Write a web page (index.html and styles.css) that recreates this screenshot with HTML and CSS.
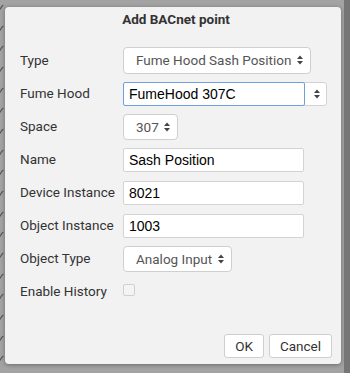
FILE: index.html
```html
<!DOCTYPE html>
<html lang="en">
<head>
  <meta charset="UTF-8" />
  <title>Add BACnet point</title>
  <meta name="viewport" content="width=device-width, initial-scale=1.0">
  <link rel="stylesheet" href="styles.css">
</head>
<body>

<div class="ticks">
  <span>✓</span><span>✓</span><span>✓</span><span>✓</span><span>✓</span><span>✓</span>
  <span>✓</span><span>✓</span><span>✓</span><span>✓</span><span>✓</span><span>✓</span>
  <span>✓</span><span>✓</span><span>✓</span><span>✓</span><span>✓</span><span>✓</span>
</div>

<div class="dialog">
  <h1 class="title">Add BACnet point</h1>

  <form class="fields" autocomplete="off">
    <label>Type</label>
    <div class="select select-type">
      <span>Fume Hood Sash Position</span>
      <svg class="arrows" width="6" height="10" viewBox="0 0 6 10"><polygon points="0,4 3,0.5 6,4"/><polygon points="0,6 3,9.5 6,6"/></svg>
    </div>

    <label>Fume Hood</label>
    <div class="combo">
      <input type="text" class="combo-input" value="FumeHood 307C">
      <svg class="arrows" width="6" height="10" viewBox="0 0 6 10"><polygon points="0,4 3,0.5 6,4"/><polygon points="0,6 3,9.5 6,6"/></svg>
    </div>

    <label>Space</label>
    <div class="select select-space">
      <span>307</span>
      <svg class="arrows" width="6" height="10" viewBox="0 0 6 10"><polygon points="0,4 3,0.5 6,4"/><polygon points="0,6 3,9.5 6,6"/></svg>
    </div>

    <label>Name</label>
    <input type="text" class="text" value="Sash Position">

    <label>Device Instance</label>
    <input type="text" class="text" value="8021">

    <label>Object Instance</label>
    <input type="text" class="text" value="1003">

    <label>Object Type</label>
    <div class="select select-object">
      <span>Analog Input</span>
      <svg class="arrows" width="6" height="10" viewBox="0 0 6 10"><polygon points="0,4 3,0.5 6,4"/><polygon points="0,6 3,9.5 6,6"/></svg>
    </div>

    <label>Enable History</label>
    <span class="check"></span>
  </form>

  <div class="actions">
    <button type="button">OK</button>
    <button type="button">Cancel</button>
  </div>
</div>

<div class="gutter"></div>
<div class="edge"></div>

</body>
</html>
```

FILE: styles.css
```css
* {
  box-sizing: border-box;
}

body {
  margin: 0;
  height: 373px;
  overflow: hidden;
  display: flex;
  background: #a3a3a3;
  font-family: Roboto, "Liberation Sans", sans-serif;
}

.ticks {
  width: 5px;
  flex: none;
  overflow: hidden;
  display: flex;
  flex-direction: column;
  padding-top: 1px;
}

.ticks span {
  height: 20.8px;
  line-height: 14px;
  font-size: 10px;
  color: #3d3d3d;
  margin-left: -3px;
}

.dialog {
  width: 336px;
  height: 357px;
  margin-top: 7px;
  flex: none;
  display: flex;
  flex-direction: column;
  background: #f2f2f2;
  border-radius: 4px;
  box-shadow: 0 1px 4px rgba(0,0,0,0.35);
  padding: 0 9px 6px 15px;
}

.title {
  margin: 0;
  height: 37px;
  padding-top: 4px;
  line-height: 16px;
  font-size: 13.5px;
  font-weight: bold;
  text-align: center;
  color: #333;
}

.fields {
  display: grid;
  grid-template-columns: 103px auto;
  grid-auto-rows: 33px;
  align-items: center;
  justify-items: start;
}

.fields label {
  font-size: 13.5px;
  color: #333;
  margin-top: -1px;
}

.select {
  display: flex;
  align-items: center;
  justify-content: space-between;
  background: #fff;
  border: 1px solid #cfcfcf;
  border-radius: 4px;
  height: 26px;
  padding: 0 7px 0 12px;
  font-size: 13.5px;
  color: #555;
}

.arrows {
  fill: #444;
}

.select-type {
  width: 188px;
  height: 27px;
  margin-top: -1px;
}

.select-space {
  width: 55px;
}

.select-object {
  width: 109px;
}

.combo {
  display: flex;
  align-items: center;
  width: 204px;
  height: 24px;
  background: #fff;
  border: 1px solid #d3d3d3;
  border-radius: 3px;
}

.combo .arrows {
  margin-left: 9px;
}

.combo-input {
  width: 182px;
  height: 24px;
  margin: -1px 0 -1px -1px;
  border: 1px solid #6f9fdc;
  border-radius: 2px;
  padding: 0 5px;
  font-family: "Liberation Sans", Arial, sans-serif;
  font-size: 14px;
  color: #000;
  text-decoration: underline wavy #e03030;
  text-decoration-thickness: 1px;
  text-underline-offset: 3px;
  outline: none;
}

.text {
  width: 181px;
  height: 24px;
  background: #fff;
  border: 1px solid #d3d3d3;
  border-radius: 2px;
  padding: 0 5px;
  font-family: "Liberation Sans", Arial, sans-serif;
  font-size: 14px;
  color: #000;
}

.check {
  width: 12px;
  height: 12px;
  margin-top: -4px;
  border: 1px solid #d0d0d0;
  border-radius: 2px;
  background: #f4f4f4;
}

.actions {
  margin-top: auto;
  display: flex;
  justify-content: flex-end;
  gap: 5px;
}

.actions button {
  height: 24px;
  padding: 0 10px;
  background: #fff;
  border: 1px solid #cfcfcf;
  border-radius: 3px;
  font-family: Roboto, "Liberation Sans", sans-serif;
  font-size: 13.5px;
  color: #333;
}

.gutter {
  width: 3px;
  flex: none;
}

.edge {
  flex: 1;
  background: #767676;
}
```
